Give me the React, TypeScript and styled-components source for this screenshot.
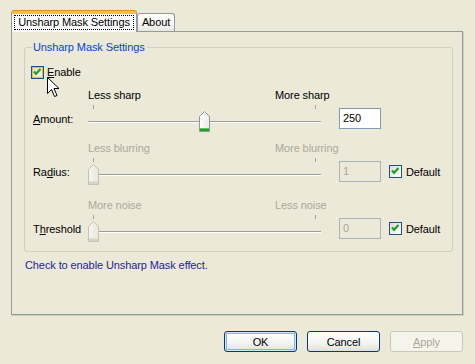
import React from 'react';
import styled, { createGlobalStyle, css } from 'styled-components';

const GlobalStyle = createGlobalStyle`
  html, body {
    margin: 0;
    padding: 0;
    background: #ece9d8;
  }
  body {
    font-family: "Liberation Sans", Arial, sans-serif;
    font-size: 11px;
    letter-spacing: -0.1px;
    color: #000;
  }
`;

const Dialog = styled.div`
  width: 475px;
  height: 364px;
  box-sizing: border-box;
  padding: 11px 12px 0 11px;
  background: #ece9d8;
`;

const TabStrip = styled.div`
  display: flex;
  align-items: flex-end;
  height: 20px;
`;

const Tab = styled.div<{ $active?: boolean }>`
  box-sizing: border-box;
  display: flex;
  align-items: center;
  justify-content: center;
  border: 1px solid #919b9c;
  border-bottom: none;
  border-radius: 3px 3px 0 0;
  line-height: 13px;
  ${(p) =>
    p.$active
      ? css`
          position: relative;
          z-index: 1;
          width: 126px;
          height: 21px;
          margin-bottom: -1px;
          padding: 1px 2px 2px;
          align-items: flex-start;
          border-top: 3px solid #fbc03f;
          box-shadow: 0 -1px 0 #e68b2c;
          background: #fcfcfe;
        `
      : css`
          width: 38px;
          height: 18px;
          padding-bottom: 1px;
          background: linear-gradient(#ffffff, #f3f2ec 70%, #e8e6dc);
        `}
`;

const FocusRect = styled.span`
  flex: 1;
  border: 1px dotted #000;
  padding: 0 2px;
  height: 15px;
  box-sizing: border-box;
  line-height: 13px;
  text-align: center;
`;

const Panel = styled.div`
  width: 452px;
  height: 284px;
  box-sizing: border-box;
  border: 1px solid #919b9c;
  box-shadow: 1px 1px 0 #d0cebf;
  padding: 8px 0 0 12px;
  background: #ece9d8;
`;

const GroupBox = styled.fieldset`
  margin: 0;
  width: 429px;
  box-sizing: border-box;
  border: 1px solid #d0d0bf;
  border-radius: 3px;
  padding: 12px 6px 9px 6px;
`;

const Legend = styled.legend`
  margin-left: 1px;
  padding: 1px 2px 0 1px;
  color: #0046d5;
  line-height: 13px;
`;

const EnableRow = styled.div`
  position: relative;
  display: flex;
  align-items: center;
  gap: 3px;
  height: 13px;
  line-height: 13px;
`;

const Cursor = styled.svg`
  position: absolute;
  left: 16px;
  top: 11px;
`;

const Box = styled.span<{ $hover?: boolean }>`
  display: inline-flex;
  width: 13px;
  height: 13px;
  box-sizing: border-box;
  border: 1px solid #1c5180;
  background: linear-gradient(135deg, #dcdcd7, #ffffff);
  ${(p) =>
    p.$hover &&
    css`
      box-shadow: inset 0 0 0 1px #f8b636, inset 0 0 0 2px #fde6b0;
    `}
`;

const CheckBox = ({ hover }: { hover?: boolean }) => (
  <Box $hover={hover}>
    <svg width="11" height="11" viewBox="0 0 11 11">
      <polyline points="2,4.5 4,6.8 8.5,2" fill="none" stroke="#21a121" strokeWidth="2.2" />
    </svg>
  </Box>
);

const Block = styled.div<{ $gap: number }>`
  margin-top: ${(p) => p.$gap}px;
`;

const CaptionRow = styled.div<{ $disabled?: boolean }>`
  display: grid;
  grid-template-columns: 57px 187px auto;
  height: 13px;
  line-height: 13px;
  color: ${(p) => (p.$disabled ? '#aca899' : '#000')};
`;

const ControlRow = styled.div`
  display: flex;
  align-items: center;
  height: 27px;
  margin-top: 3px;
`;

const Label = styled.span`
  width: 57px;
  box-sizing: border-box;
  padding-left: 2px;
`;

const Slider = styled.div`
  position: relative;
  width: 251px;
  height: 27px;
`;

const Track = styled.div`
  position: absolute;
  left: 0;
  top: 16px;
  width: 233px;
  height: 2px;
  box-sizing: border-box;
  border-top: 1px solid #9d9c99;
  border-bottom: 1px solid #ffffff;
  border-radius: 1px 0 0 1px;
`;

const Tick = styled.div<{ $x: number }>`
  position: absolute;
  top: 0;
  left: ${(p) => p.$x}px;
  width: 1px;
  height: 4px;
  background: #a4a39f;
`;

const ThumbSvg = styled.svg`
  position: absolute;
  top: 6px;
`;

const Edit = styled.div<{ $disabled?: boolean }>`
  width: 42px;
  height: 21px;
  box-sizing: border-box;
  padding: 0 3px;
  line-height: 19px;
  border: 1px solid ${(p) => (p.$disabled ? '#a9b3b9' : '#7f9db9')};
  background: ${(p) => (p.$disabled ? '#ece9d8' : '#ffffff')};
  color: ${(p) => (p.$disabled ? '#aca899' : '#000')};
`;

const DefaultCheck = styled.label`
  display: flex;
  align-items: center;
  gap: 4px;
  margin-left: 8px;
`;

const Hint = styled.div`
  margin: 7px 0 0 1px;
  line-height: 13px;
  color: #1e1e9e;
`;

const ButtonRow = styled.div`
  display: flex;
  justify-content: flex-end;
  gap: 10px;
  margin-top: 16px;
`;

const Button = styled.button<{ $default?: boolean }>`
  width: 73px;
  height: 21px;
  padding: 0;
  font: inherit;
  letter-spacing: inherit;
  border-radius: 3px;
  border: 1px solid ${(p) => (p.disabled ? '#c9c7ba' : '#003c74')};
  color: ${(p) => (p.disabled ? '#aca899' : '#000')};
  background: ${(p) =>
    p.disabled ? '#f5f4ea' : 'linear-gradient(#ffffff, #f3f3ef 60%, #e3e0d5)'};
  box-shadow: ${(p) => (p.$default ? 'inset 0 0 0 1px #cee7ff, inset 0 0 0 2px #8fb0ec' : 'none')};
`;

const Thumb = ({ left, disabled }: { left: number; disabled?: boolean }) => (
  <ThumbSvg width="11" height="21" viewBox="0 0 11 21" style={{ left }}>
    <defs>
      <linearGradient id={disabled ? 'thd' : 'the'} x1="0" x2="1" y1="0" y2="0">
        <stop offset="0" stopColor={disabled ? '#f6f5f0' : '#ffffff'} />
        <stop offset="1" stopColor={disabled ? '#e9e7dc' : '#eceae2'} />
      </linearGradient>
    </defs>
    <path
      d="M0.5 20.5 V5.5 L5.5 0.5 L10.5 5.5 V20.5 Z"
      fill={`url(#${disabled ? 'thd' : 'the'})`}
      stroke={disabled ? '#c4c2b6' : '#8a9a94'}
    />
    <rect x="1" y="17" width="9" height="3" fill={disabled ? '#d8d5c8' : '#21a121'} />
    <rect x="1" y="17" width="9" height="1" fill={disabled ? '#e2e0d5' : '#60c860'} />
  </ThumbSvg>
);

type Row = {
  label: React.ReactNode;
  less: string;
  more: string;
  value: number;
  max: number;
  disabled?: boolean;
  gap: number;
};

const rows: Row[] = [
  { label: <><u>A</u>mount:</>, less: 'Less sharp', more: 'More sharp', value: 250, max: 500, gap: 10 },
  { label: <>Ra<u>d</u>ius:</>, less: 'Less blurring', more: 'More blurring', value: 1, max: 1, disabled: true, gap: 10 },
  { label: <>T<u>h</u>reshold</>, less: 'More noise', more: 'Less noise', value: 0, max: 1, disabled: true, gap: 14 },
];

const SliderBlock = ({ row }: { row: Row }) => {
  const frac = row.disabled ? 0 : row.value / row.max;
  return (
    <Block $gap={row.gap}>
      <CaptionRow $disabled={row.disabled}>
        <span />
        <span>{row.less}</span>
        <span>{row.more}</span>
      </CaptionRow>
      <ControlRow>
        <Label>{row.label}</Label>
        <Slider>
          <Tick $x={5} />
          <Tick $x={227} />
          <Track />
          <Thumb left={Math.round(frac * 222)} disabled={row.disabled} />
        </Slider>
        <Edit $disabled={row.disabled}>{row.value}</Edit>
        {row.disabled && (
          <DefaultCheck>
            <CheckBox />
            Default
          </DefaultCheck>
        )}
      </ControlRow>
    </Block>
  );
};

export default function App() {
  return (
    <>
      <GlobalStyle />
      <Dialog>
        <TabStrip>
          <Tab $active>
            <FocusRect>Unsharp Mask Settings</FocusRect>
          </Tab>
          <Tab>About</Tab>
        </TabStrip>
        <Panel>
          <GroupBox>
            <Legend>Unsharp Mask Settings</Legend>
            <EnableRow>
              <CheckBox hover />
              <span>
                <u>E</u>nable
              </span>
              <Cursor width="13" height="21" viewBox="0 0 13 21">
                <path
                  d="M0.5 0.5 V16.5 L4.5 12.5 L7.5 19.5 L10 18.5 L7 11.5 H12 Z"
                  fill="#fff"
                  stroke="#000"
                  strokeLinejoin="miter"
                />
              </Cursor>
            </EnableRow>
            {rows.map((r, i) => (
              <SliderBlock key={i} row={r} />
            ))}
          </GroupBox>
          <Hint>Check to enable Unsharp Mask effect.</Hint>
        </Panel>
        <ButtonRow>
          <Button $default>OK</Button>
          <Button>Cancel</Button>
          <Button disabled>
            <u>A</u>pply
          </Button>
        </ButtonRow>
      </Dialog>
    </>
  );
}
